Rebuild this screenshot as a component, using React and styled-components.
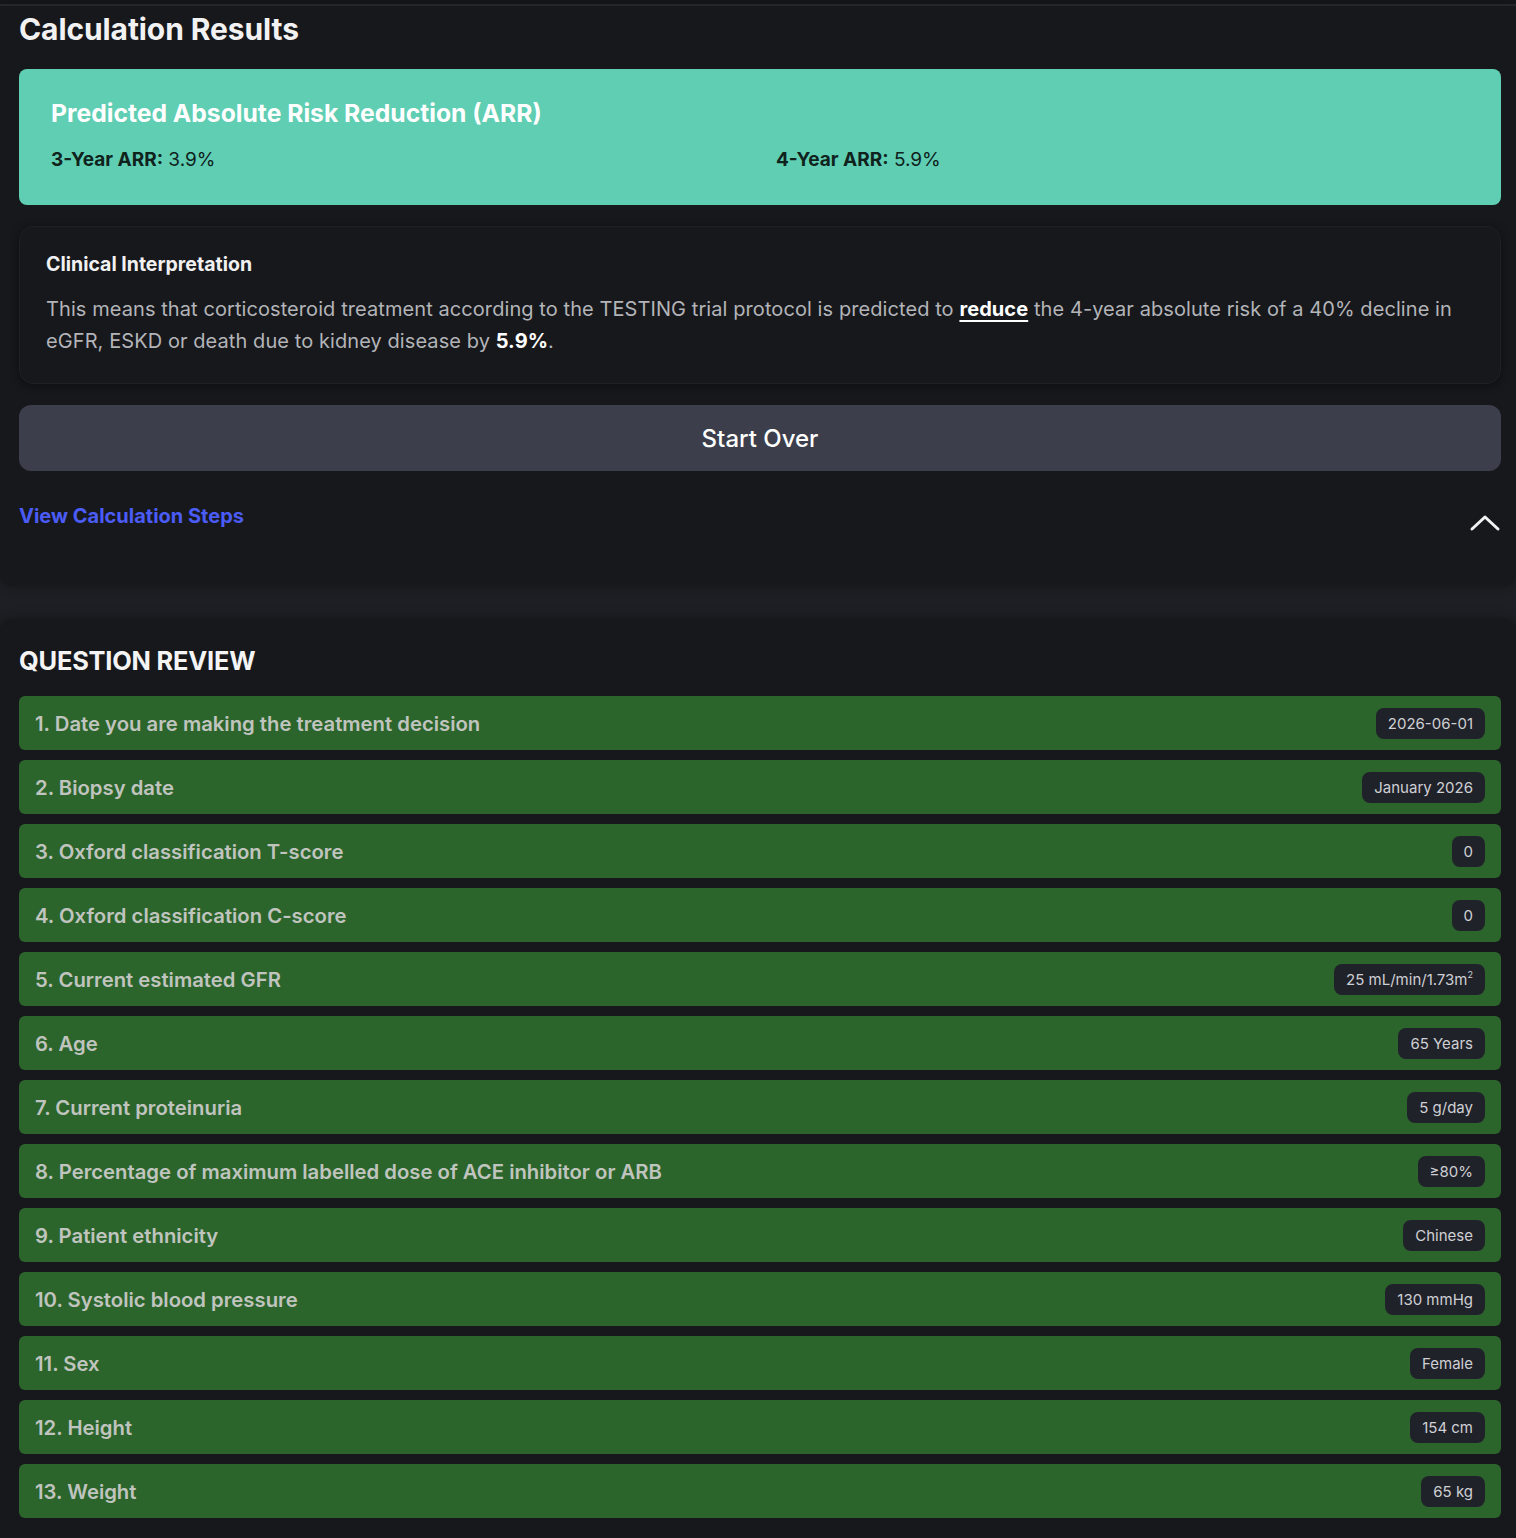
import React from "react";
import styled, { createGlobalStyle } from "styled-components";

const Global = createGlobalStyle`
  html, body { margin: 0; padding: 0; background: #1e1f24; }
  body { font-family: Inter, "Open Sans", "Liberation Sans", sans-serif; color: #fff; }
  * { box-sizing: border-box; }
`;

const Page = styled.div`
  padding-top: 4px;
  background: #17181c;
`;

const Stack = styled.div`
  background: #1e1f24;
  display: flex;
  flex-direction: column;
  gap: 33px;
`;

const Card = styled.section`
  background: #17181c;
  border-top: ${(p) => (p.$topLine ? "2px solid #25262d" : "none")};
  border-radius: ${(p) => p.$radius};
  padding: ${(p) => p.$padding};
  box-shadow: 0 0 12px rgba(0, 0, 0, 0.35);
`;

const PageTitle = styled.h2`
  margin: 0;
  font-size: 30px;
  font-weight: 700;
  line-height: 36px;
  color: #f2f2f2;
  letter-spacing: -0.1px;
`;

const ArrBox = styled.div`
  margin-top: 22px;
  background: #5fceb3;
  border-radius: 8px;
  padding: 27px 32px 32px;
`;

const ArrTitle = styled.h3`
  margin: 0;
  font-size: 24.7px;
  font-weight: 700;
  line-height: 34px;
  color: #fff;
`;

const ArrGrid = styled.div`
  margin-top: 17px;
  display: grid;
  grid-template-columns: 1fr 1fr;
  column-gap: 32px;
  font-size: 19px;
  line-height: 26px;
  color: #10221c;
  b { font-weight: 700; }
`;

const Interp = styled.div`
  margin-top: 21px;
  background: #17181c;
  border-radius: 14px;
  border: 1px solid #1f2025;
  box-shadow: 0 2px 10px rgba(0, 0, 0, 0.45);
  padding: 22px 26px 26px;
`;

const InterpTitle = styled.h4`
  margin: 0;
  font-size: 19.5px;
  font-weight: 700;
  line-height: 30px;
  color: #f1f1f1;
`;

const InterpText = styled.p`
  margin: 14px 0 0;
  font-size: 20px;
  letter-spacing: 0.08px;
  line-height: 32px;
  color: #b3b4b8;
  b { color: #fff; font-weight: 700; }
  u { color: #fff; font-weight: 700; text-underline-offset: 4px; }
`;

const StartButton = styled.button`
  margin-top: 21px;
  width: 100%;
  height: 66px;
  border: none;
  border-radius: 12px;
  background: #3c3f4b;
  color: #fff;
  font-family: inherit;
  font-size: 24px;
  font-weight: 500;
`;

const StepsRow = styled.div`
  margin-top: 33px;
  display: flex;
  align-items: flex-start;
  justify-content: space-between;
`;

const StepsLink = styled.a`
  font-size: 20px;
  line-height: 24px;
  font-weight: 700;
  color: #4b5cf6;
  text-decoration: none;
`;

const Chevron = styled.svg`
  display: block;
  width: 32px;
  height: 28px;
`;

const ReviewTitle = styled.h2`
  margin: 0 0 17px;
  font-size: 25.4px;
  font-weight: 700;
  line-height: 36px;
  color: #f4f4f4;
  letter-spacing: -0.2px;
`;

const RowList = styled.div`
  display: flex;
  flex-direction: column;
  gap: 10px;
`;

const Row = styled.div`
  height: 54px;
  background: #2c652c;
  border-radius: 6px;
  display: flex;
  align-items: center;
  justify-content: space-between;
  padding: 0 16px;
`;

const RowLabel = styled.span`
  font-size: 20.3px;
  font-weight: 600;
  color: #c0c4bf;
`;

const Badge = styled.span`
  background: #20222a;
  border-radius: 8px;
  height: 31px;
  padding: 0 12px;
  display: inline-flex;
  align-items: center;
  font-size: 15px;
  color: #cfd0d4;
  sup { font-size: 9px; margin-top: -10px; }
`;

const rows = [
  ["Date you are making the treatment decision", "2026-06-01"],
  ["Biopsy date", "January 2026"],
  ["Oxford classification T-score", "0"],
  ["Oxford classification C-score", "0"],
  ["Current estimated GFR", <>25 mL/min/1.73m<sup>2</sup></>],
  ["Age", "65 Years"],
  ["Current proteinuria", "5 g/day"],
  ["Percentage of maximum labelled dose of ACE inhibitor or ARB", "≥80%"],
  ["Patient ethnicity", "Chinese"],
  ["Systolic blood pressure", "130 mmHg"],
  ["Sex", "Female"],
  ["Height", "154 cm"],
  ["Weight", "65 kg"],
];

export default function App() {
  return (
    <Page>
      <Global />
      <Stack>
        <Card $topLine $radius="0 0 12px 12px" $padding="5px 15px 54px 19px">
          <PageTitle>Calculation Results</PageTitle>
          <ArrBox>
            <ArrTitle>Predicted Absolute Risk Reduction (ARR)</ArrTitle>
            <ArrGrid>
              <div><b>3-Year ARR:</b> 3.9%</div>
              <div><b>4-Year ARR:</b> 5.9%</div>
            </ArrGrid>
          </ArrBox>
          <Interp>
            <InterpTitle>Clinical Interpretation</InterpTitle>
            <InterpText>
              This means that corticosteroid treatment according to the TESTING trial protocol is predicted to{" "}
              <u>reduce</u> the 4-year absolute risk of a 40% decline in eGFR, ESKD or death due to kidney disease by{" "}
              <b>5.9%</b>.
            </InterpText>
          </Interp>
          <StartButton>Start Over</StartButton>
          <StepsRow>
            <StepsLink href="#">View Calculation Steps</StepsLink>
            <Chevron viewBox="0 0 32 28" fill="none">
              <path d="M3 25 L16 13 L29 25" stroke="#f2f2f2" strokeWidth="3" strokeLinecap="round" strokeLinejoin="round" />
            </Chevron>
          </StepsRow>
        </Card>
        <Card $radius="12px 12px 0 0" $padding="24px 15px 21px 19px">
          <ReviewTitle>QUESTION REVIEW</ReviewTitle>
          <RowList>
            {rows.map(([label, value], i) => (
              <Row key={i}>
                <RowLabel>{i + 1}. {label}</RowLabel>
                <Badge>{value}</Badge>
              </Row>
            ))}
          </RowList>
        </Card>
      </Stack>
    </Page>
  );
}
